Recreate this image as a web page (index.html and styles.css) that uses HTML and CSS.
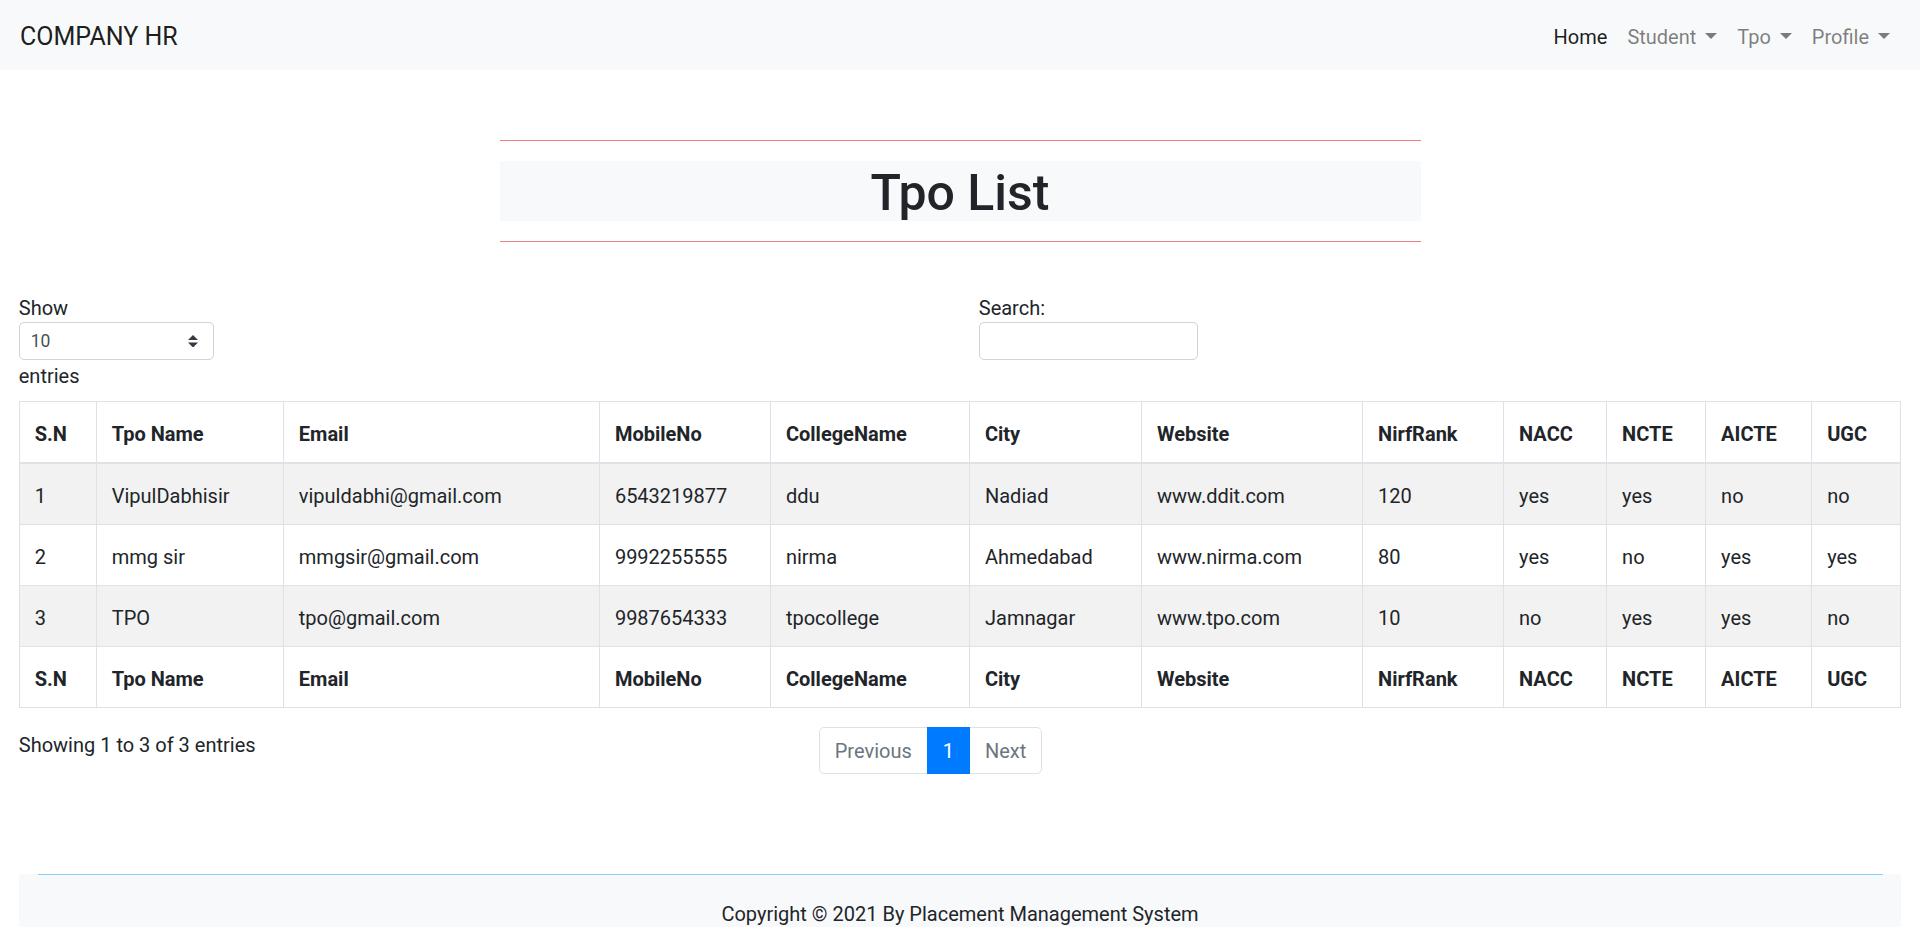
FILE: index.html
```html
<!DOCTYPE html>
<html lang="en">
<head>
<meta charset="utf-8">
<title>Tpo List</title>
<link rel="stylesheet" href="styles.css">
</head>
<body>
<nav class="navbar">
  <a class="brand" href="#">COMPANY HR</a>
  <ul class="nav">
    <li><a class="nav-link active" href="#">Home</a></li>
    <li><a class="nav-link" href="#">Student<span class="caret"></span></a></li>
    <li><a class="nav-link" href="#">Tpo<span class="caret"></span></a></li>
    <li><a class="nav-link" href="#">Profile<span class="caret"></span></a></li>
  </ul>
</nav>

<main class="page">
  <section class="title-row">
    <div class="title-col">
      <hr class="red-rule">
      <h1 class="title">Tpo List</h1>
      <hr class="red-rule">
    </div>
  </section>

  <div class="dt-top">
    <div class="dt-length">
      <span class="dt-label">Show</span>
      <div class="select-box"><span>10</span>
        <svg class="select-arrows" viewBox="0 0 4 5" width="10" height="12.5"><path d="M2 0L0 2h4zm0 5L0 3h4z" fill="#343a40"/></svg>
      </div>
      <span class="dt-label">entries</span>
    </div>
    <div class="dt-filter">
      <span class="dt-label">Search:</span>
      <div class="search-input"></div>
    </div>
  </div>

  <table class="data-table">
    <colgroup>
      <col class="w-sn"><col class="w-name"><col class="w-email"><col class="w-mobile"><col class="w-college"><col class="w-city"><col class="w-web"><col class="w-rank"><col class="w-nacc"><col class="w-ncte"><col class="w-aicte"><col class="w-ugc">
    </colgroup>
    <thead>
      <tr><th>S.N</th><th>Tpo Name</th><th>Email</th><th>MobileNo</th><th>CollegeName</th><th>City</th><th>Website</th><th>NirfRank</th><th>NACC</th><th>NCTE</th><th>AICTE</th><th>UGC</th></tr>
    </thead>
    <tbody>
      <tr><td>1</td><td>VipulDabhisir</td><td>vipuldabhi@gmail.com</td><td>6543219877</td><td>ddu</td><td>Nadiad</td><td>www.ddit.com</td><td>120</td><td>yes</td><td>yes</td><td>no</td><td>no</td></tr>
      <tr><td>2</td><td>mmg sir</td><td>mmgsir@gmail.com</td><td>9992255555</td><td>nirma</td><td>Ahmedabad</td><td>www.nirma.com</td><td>80</td><td>yes</td><td>no</td><td>yes</td><td>yes</td></tr>
      <tr><td>3</td><td>TPO</td><td>tpo@gmail.com</td><td>9987654333</td><td>tpocollege</td><td>Jamnagar</td><td>www.tpo.com</td><td>10</td><td>no</td><td>yes</td><td>yes</td><td>no</td></tr>
    </tbody>
    <tfoot>
      <tr><th>S.N</th><th>Tpo Name</th><th>Email</th><th>MobileNo</th><th>CollegeName</th><th>City</th><th>Website</th><th>NirfRank</th><th>NACC</th><th>NCTE</th><th>AICTE</th><th>UGC</th></tr>
    </tfoot>
  </table>

  <div class="dt-bottom">
    <div class="dt-info">Showing 1 to 3 of 3 entries</div>
    <ul class="pagination">
      <li><span class="page-link first">Previous</span></li>
      <li><span class="page-link active">1</span></li>
      <li><span class="page-link last">Next</span></li>
    </ul>
  </div>
</main>

<footer class="footer">
  <hr class="footer-rule">
  <p class="copy">Copyright © 2021 By Placement Management System</p>
</footer>
</body>
</html>
```

FILE: styles.css
```css
html { font-size: 20px; }
body {
  margin: 0;
  font-family: "Segoe UI", Roboto, "Helvetica Neue", Arial, sans-serif;
  font-size: 20px;
  line-height: 1.5;
  color: #212529;
  background: #fff;
}
a { text-decoration: none; }

.navbar {
  display: flex;
  justify-content: space-between;
  align-items: center;
  height: 70px;
  box-sizing: border-box;
  padding: 10px 20px;
  background: #f8f9fa;
}
.brand {
  font-size: 25px;
  line-height: 37.5px;
  padding: 8px 0 4.5px;
  color: rgba(0,0,0,.9);
}
.nav { display: flex; list-style: none; margin: 0; padding: 0; }
.nav-link {
  display: block;
  padding: 12px 10px 8px;
  line-height: 30px;
  color: rgba(0,0,0,.5);
}
.nav-link.active { color: rgba(0,0,0,.9); }
.caret {
  display: inline-block;
  width: 0; height: 0;
  margin-left: 9px;
  vertical-align: .255em;
  border-top: .3em solid;
  border-right: .3em solid transparent;
  border-left: .3em solid transparent;
}

.page { padding: 0 18.75px; }
.title-row { display: flex; justify-content: center; padding-top: 50px; }
.title-col { width: 921px; }
.red-rule {
  height: 0;
  border: 0;
  border-top: 1px solid #f08080;
  margin: 20px 0;
}
.title {
  margin: 0;
  background: #f8f9fa;
  text-align: center;
  font-size: 50px;
  line-height: 60px;
  font-weight: 500;
  padding-top: 2px;
  height: 58px;
}

.dt-top {
  display: grid;
  grid-template-columns: 1fr 1fr;
  column-gap: 37.5px;
  padding-top: 30px;
}
.dt-label { display: block; line-height: 30px; padding-top: 1px; height: 29px; }
.select-box {
  width: 195px;
  height: 38px;
  box-sizing: border-box;
  border: 1px solid #ced4da;
  border-radius: 5px;
  display: flex;
  align-items: center;
  justify-content: space-between;
  padding: 0 15px 0 11px;
  font-size: 17.5px;
  color: #495057;
}
.search-input {
  width: 219px;
  height: 38px;
  box-sizing: border-box;
  border: 1px solid #ced4da;
  border-radius: 5px;
  background: #fff;
}

.data-table {
  width: 100%;
  table-layout: fixed;
  border-collapse: collapse;
  margin-top: 11px;
  border: 1px solid #dee2e6;
}
.data-table th, .data-table td {
  padding: 17px 15px 13px;
  line-height: 30px;
  text-align: left;
  vertical-align: top;
  border: 1px solid #dee2e6;
  white-space: nowrap;
}
.data-table th { font-weight: 700; }
.data-table thead th { border-bottom-width: 2px; }
.data-table tbody tr:nth-child(odd) { background: #f2f2f2; }

.w-sn { width: 77px; }
.w-name { width: 187px; }
.w-email { width: 316px; }
.w-mobile { width: 171px; }
.w-college { width: 199px; }
.w-city { width: 172px; }
.w-web { width: 221px; }
.w-rank { width: 141px; }
.w-nacc { width: 103px; }
.w-ncte { width: 99px; }
.w-aicte { width: 106px; }
.w-ugc { width: 89px; }

.dt-bottom {
  display: grid;
  grid-template-columns: 762.5px 1fr;
  column-gap: 37.5px;
  align-items: start;
  margin-top: 19px;
}
.dt-info { line-height: 30px; padding-top: 3px; }
.pagination { display: flex; list-style: none; margin: 0; padding: 0; }
.page-link {
  display: block;
  padding: 11px 15px 9px;
  line-height: 25px;
  border: 1px solid #dee2e6;
  margin-left: -1px;
  color: #6c757d;
  background: #fff;
}
.page-link.first { margin-left: 0; border-radius: 5px 0 0 5px; }
.page-link.last { border-radius: 0 5px 5px 0; }
.page-link.active {
  position: relative;
  z-index: 1;
  background: #007bff;
  border-color: #007bff;
  color: #fff;
}

.footer {
  margin: 100px 18.75px 0;
  padding: 0 18.75px;
  background: #f8f9fa;
}
.footer-rule {
  height: 0;
  border: 0;
  border-top: 1px solid #87cefa;
  margin: 0 0 22px;
}
.copy {
  margin: 0 0 20px;
  text-align: center;
  line-height: 30px;
  padding-top: 2px;
  height: 28px;
}
```
